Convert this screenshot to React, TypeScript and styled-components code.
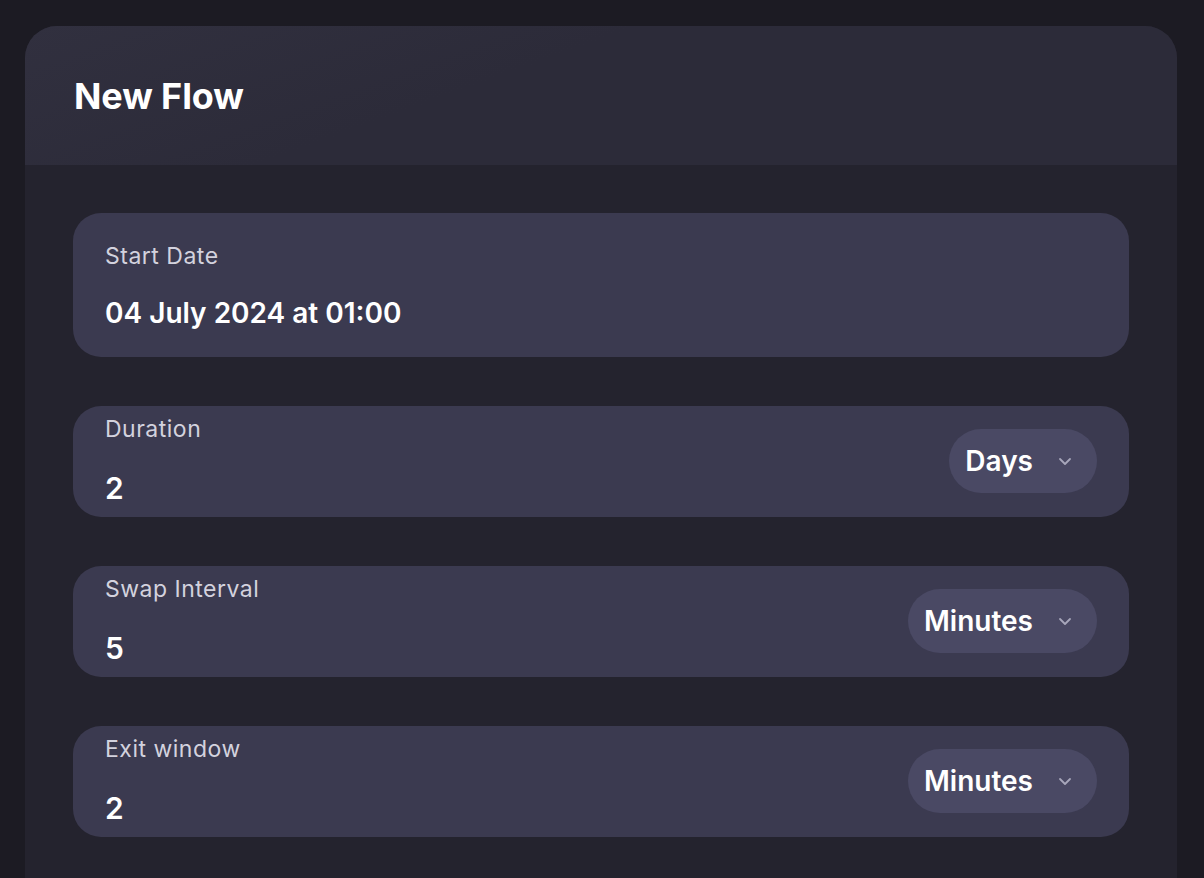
import { createGlobalStyle, styled } from "styled-components";

const GlobalStyle = createGlobalStyle`
  html, body {
    margin: 0;
    padding: 0;
    background: #1c1b23;
    font-family: Inter, "Noto Sans", sans-serif;
    color: #ffffff;
  }
  * {
    box-sizing: border-box;
  }
`;

const Page = styled.div`
  height: 878px;
  overflow: hidden;
  padding: 26px 27px 0 25px;
`;

const Card = styled.div`
  width: 1152px;
  min-height: 900px;
  border-radius: 32px 32px 0 0;
  background: #24232e;
  overflow: hidden;
`;

const Header = styled.div`
  height: 139px;
  display: flex;
  align-items: center;
  padding: 0 49px;
  background: linear-gradient(160deg, #31303f 0%, #2c2b39 40%, #2c2b39 100%);
`;

const Title = styled.h1`
  margin: 0;
  font-size: 36px;
  font-weight: 700;
  letter-spacing: -0.1px;
`;

const Body = styled.div`
  display: flex;
  flex-direction: column;
  gap: 49px;
  padding: 48px 48px;
`;

const Field = styled.div<{ $tall?: boolean }>`
  display: flex;
  align-items: center;
  justify-content: space-between;
  background: #3b3a50;
  border-radius: 28px;
  padding: ${(p) => (p.$tall ? "28px 32px 26px" : "8px 32px 11px")};
`;

const FieldText = styled.div<{ $gap: number }>`
  display: flex;
  flex-direction: column;
  gap: ${(p) => p.$gap}px;
`;

const Label = styled.div`
  font-size: 23px;
  line-height: 30px;
  letter-spacing: 0.5px;
  color: #d3d2de;
  font-weight: 400;
`;

const Value = styled.div<{ $size: number }>`
  font-size: ${(p) => p.$size}px;
  line-height: 36px;
  font-weight: 600;
  color: #ffffff;
`;

const Select = styled.button`
  display: flex;
  align-items: center;
  gap: 24px;
  height: 64px;
  padding: 0 24px 0 16px;
  border: 0;
  border-radius: 32px;
  background: #4a4964;
  color: #ffffff;
  font-family: inherit;
  font-size: 28px;
  font-weight: 600;
  cursor: pointer;
  margin-top: 2px;
`;

const Chevron = () => (
  <svg width="16" height="16" viewBox="0 0 16 16" fill="none">
    <path
      d="M3 6l5 5 5-5"
      stroke="#a8a7bb"
      strokeWidth="1.8"
      strokeLinecap="round"
      strokeLinejoin="round"
    />
  </svg>
);

const rows = [
  { label: "Duration", value: "2", unit: "Days" },
  { label: "Swap Interval", value: "5", unit: "Minutes" },
  { label: "Exit window", value: "2", unit: "Minutes" },
];

export default function App() {
  return (
    <>
      <GlobalStyle />
      <Page>
        <Card>
          <Header>
            <Title>New Flow</Title>
          </Header>
          <Body>
            <Field $tall>
              <FieldText $gap={24}>
                <Label>Start Date</Label>
                <Value $size={28}>04 July 2024 at 01:00</Value>
              </FieldText>
            </Field>
            {rows.map((r) => (
              <Field key={r.label}>
                <FieldText $gap={26}>
                  <Label>{r.label}</Label>
                  <Value $size={30}>{r.value}</Value>
                </FieldText>
                <Select>
                  {r.unit}
                  <Chevron />
                </Select>
              </Field>
            ))}
          </Body>
        </Card>
      </Page>
    </>
  );
}
